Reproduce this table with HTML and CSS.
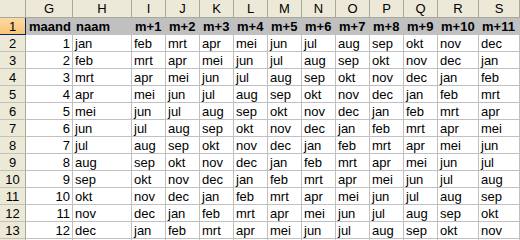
FILE: index.html
```html
<!DOCTYPE html>
<html>
<head>
<meta charset="utf-8">
<link rel="stylesheet" href="styles.css">
</head>
<body>
<div class="sheet">
  <div class="ch corner"></div>
  <div class="ch">G</div><div class="ch">H</div><div class="ch">I</div><div class="ch">J</div><div class="ch">K</div><div class="ch">L</div><div class="ch">M</div><div class="ch">N</div><div class="ch">O</div><div class="ch">P</div><div class="ch">Q</div><div class="ch">R</div><div class="ch">S</div>

  <div class="rh sel">1</div>
  <div class="c hd">maand</div><div class="c hd">naam</div><div class="c hd">m+1</div><div class="c hd">m+2</div><div class="c hd">m+3</div><div class="c hd">m+4</div><div class="c hd">m+5</div><div class="c hd">m+6</div><div class="c hd">m+7</div><div class="c hd">m+8</div><div class="c hd">m+9</div><div class="c hd">m+10</div><div class="c hd">m+11</div>

  <div class="rh">2</div>
  <div class="c num">1</div><div class="c">jan</div><div class="c">feb</div><div class="c">mrt</div><div class="c">apr</div><div class="c">mei</div><div class="c">jun</div><div class="c">jul</div><div class="c">aug</div><div class="c">sep</div><div class="c">okt</div><div class="c">nov</div><div class="c">dec</div>

  <div class="rh">3</div>
  <div class="c num">2</div><div class="c">feb</div><div class="c">mrt</div><div class="c">apr</div><div class="c">mei</div><div class="c">jun</div><div class="c">jul</div><div class="c">aug</div><div class="c">sep</div><div class="c">okt</div><div class="c">nov</div><div class="c">dec</div><div class="c">jan</div>

  <div class="rh">4</div>
  <div class="c num">3</div><div class="c">mrt</div><div class="c">apr</div><div class="c">mei</div><div class="c">jun</div><div class="c">jul</div><div class="c">aug</div><div class="c">sep</div><div class="c">okt</div><div class="c">nov</div><div class="c">dec</div><div class="c">jan</div><div class="c">feb</div>

  <div class="rh">5</div>
  <div class="c num">4</div><div class="c">apr</div><div class="c">mei</div><div class="c">jun</div><div class="c">jul</div><div class="c">aug</div><div class="c">sep</div><div class="c">okt</div><div class="c">nov</div><div class="c">dec</div><div class="c">jan</div><div class="c">feb</div><div class="c">mrt</div>

  <div class="rh">6</div>
  <div class="c num">5</div><div class="c">mei</div><div class="c">jun</div><div class="c">jul</div><div class="c">aug</div><div class="c">sep</div><div class="c">okt</div><div class="c">nov</div><div class="c">dec</div><div class="c">jan</div><div class="c">feb</div><div class="c">mrt</div><div class="c">apr</div>

  <div class="rh">7</div>
  <div class="c num">6</div><div class="c">jun</div><div class="c">jul</div><div class="c">aug</div><div class="c">sep</div><div class="c">okt</div><div class="c">nov</div><div class="c">dec</div><div class="c">jan</div><div class="c">feb</div><div class="c">mrt</div><div class="c">apr</div><div class="c">mei</div>

  <div class="rh">8</div>
  <div class="c num">7</div><div class="c">jul</div><div class="c">aug</div><div class="c">sep</div><div class="c">okt</div><div class="c">nov</div><div class="c">dec</div><div class="c">jan</div><div class="c">feb</div><div class="c">mrt</div><div class="c">apr</div><div class="c">mei</div><div class="c">jun</div>

  <div class="rh">9</div>
  <div class="c num">8</div><div class="c">aug</div><div class="c">sep</div><div class="c">okt</div><div class="c">nov</div><div class="c">dec</div><div class="c">jan</div><div class="c">feb</div><div class="c">mrt</div><div class="c">apr</div><div class="c">mei</div><div class="c">jun</div><div class="c">jul</div>

  <div class="rh">10</div>
  <div class="c num">9</div><div class="c">sep</div><div class="c">okt</div><div class="c">nov</div><div class="c">dec</div><div class="c">jan</div><div class="c">feb</div><div class="c">mrt</div><div class="c">apr</div><div class="c">mei</div><div class="c">jun</div><div class="c">jul</div><div class="c">aug</div>

  <div class="rh">11</div>
  <div class="c num">10</div><div class="c">okt</div><div class="c">nov</div><div class="c">dec</div><div class="c">jan</div><div class="c">feb</div><div class="c">mrt</div><div class="c">apr</div><div class="c">mei</div><div class="c">jun</div><div class="c">jul</div><div class="c">aug</div><div class="c">sep</div>

  <div class="rh">12</div>
  <div class="c num">11</div><div class="c">nov</div><div class="c">dec</div><div class="c">jan</div><div class="c">feb</div><div class="c">mrt</div><div class="c">apr</div><div class="c">mei</div><div class="c">jun</div><div class="c">jul</div><div class="c">aug</div><div class="c">sep</div><div class="c">okt</div>

  <div class="rh">13</div>
  <div class="c num">12</div><div class="c">dec</div><div class="c">jan</div><div class="c">feb</div><div class="c">mrt</div><div class="c">apr</div><div class="c">mei</div><div class="c">jun</div><div class="c">jul</div><div class="c">aug</div><div class="c">sep</div><div class="c">okt</div><div class="c">nov</div>

  <div class="rh"></div>
  <div class="c"></div><div class="c"></div><div class="c"></div><div class="c"></div><div class="c"></div><div class="c"></div><div class="c"></div><div class="c"></div><div class="c"></div><div class="c"></div><div class="c"></div><div class="c"></div><div class="c"></div>
</div>
</body>
</html>
```

FILE: styles.css
```css
html, body {
  margin: 0;
  padding: 0;
  background: #ffffff;
}

.sheet {
  display: grid;
  grid-template-columns: 26px 47px 59px repeat(9, 34px) 41px 41px;
  grid-template-rows: 18px repeat(14, 17px);
  width: 520px;
  height: 240px;
  overflow: hidden;
  font-family: "Liberation Sans", Arial, sans-serif;
  font-size: 13px;
  color: #000000;
}

.sheet > div {
  box-sizing: border-box;
  white-space: nowrap;
  overflow: hidden;
}

.ch {
  background: #ece9d8;
  border-right: 1px solid #aca899;
  border-bottom: 1px solid #aca899;
  text-align: center;
  line-height: 14px;
  padding-top: 2px;
}

.rh {
  background: #ece9d8;
  border-right: 1px solid #aca899;
  border-bottom: 1px solid #c5c2b2;
  text-align: center;
  line-height: 14px;
  padding-top: 2px;
}

.rh.sel {
  background: linear-gradient(#fbd9a2, #f8c678);
  border-right-color: #0a246a;
  border-bottom-color: #0a246a;
}

.c {
  background: #ffffff;
  border-right: 1px solid #c0c0c0;
  border-bottom: 1px solid #c0c0c0;
  padding: 2px 2px 0 2px;
  line-height: 14px;
}

.c.num {
  text-align: right;
}

.c.hd {
  background: #c0c0c0;
  font-weight: bold;
  overflow: visible;
  padding-left: 3px;
}
```
